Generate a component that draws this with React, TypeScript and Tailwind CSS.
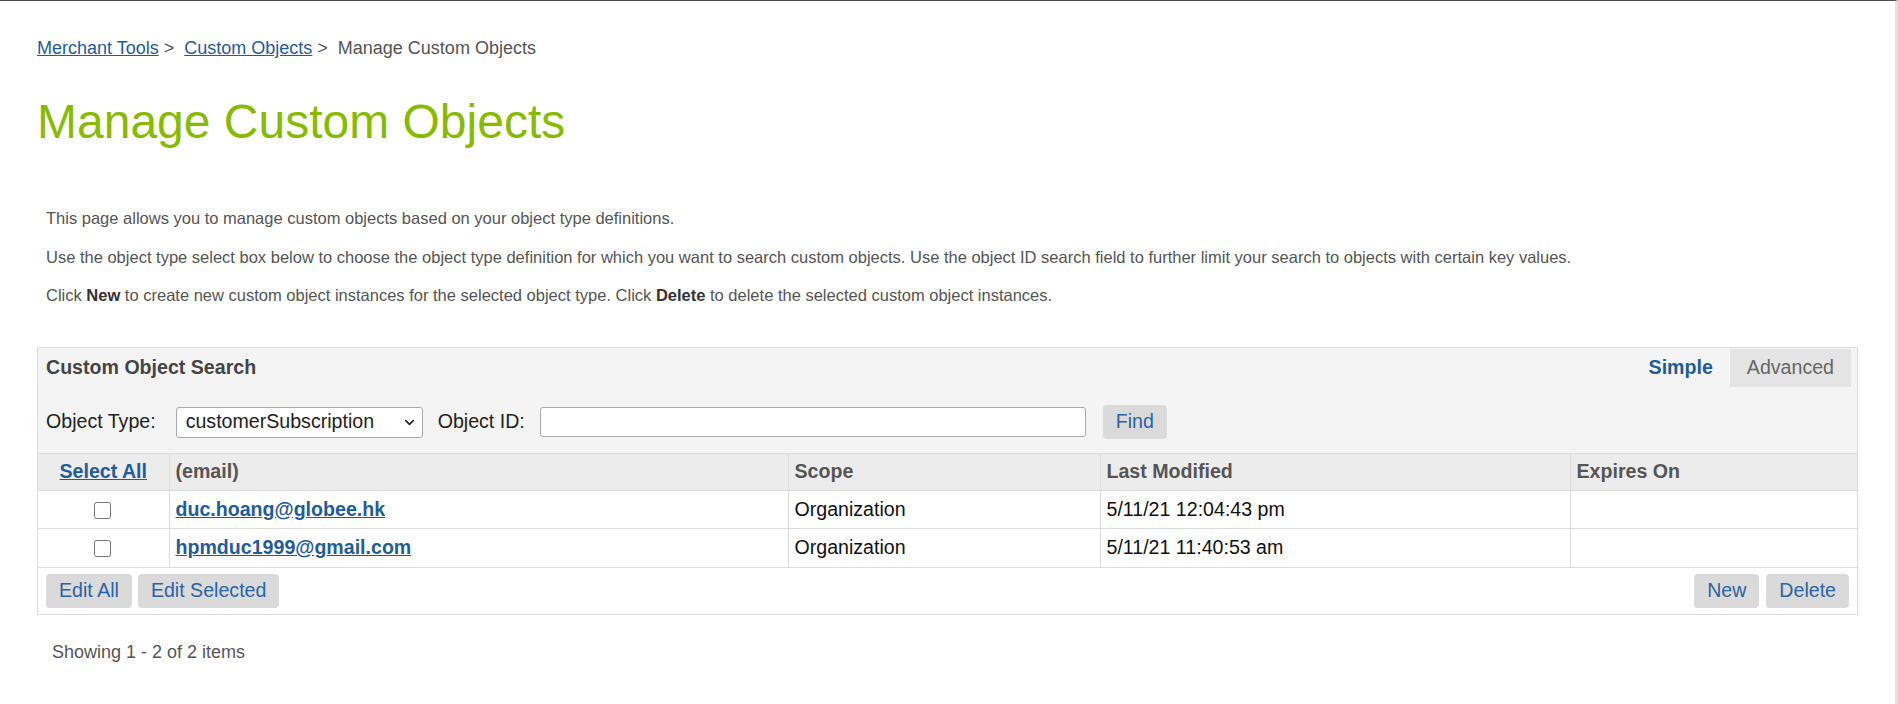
import { ChevronDown } from 'lucide-react';

const ROWS = [
  { id: 'duc.hoang@globee.hk', scope: 'Organization', modified: '5/11/21 12:04:43 pm', expires: '' },
  { id: 'hpmduc1999@gmail.com', scope: 'Organization', modified: '5/11/21 11:40:53 am', expires: '' },
];

function GrayButton({ label }: { label: string }) {
  return (
    <button className="h-[34px] px-[13px] rounded-[4px] bg-[#dadada] text-[#2a64a3] text-[19.6px] leading-none">
      {label}
    </button>
  );
}

export default function App() {
  return (
    <div className="min-h-[704px] w-full bg-white border-t border-[#4d4d4d] border-r-[3px] border-r-[#e3e3e3] font-['Liberation_Sans',Arial,sans-serif]">
      <div className="px-[37px] pt-[37px]">
        {/* breadcrumb */}
        <div className="text-[18px] leading-[21px] text-[#555]">
          <a className="text-[#1f5c99] underline">Merchant Tools</a>
          <span>&nbsp;&gt;&nbsp; </span>
          <a className="text-[#1f5c99] underline">Custom Objects</a>
          <span>&nbsp;&gt;&nbsp; </span>
          <span>Manage Custom Objects</span>
        </div>

        <h1 className="mt-[35px] text-[48px] leading-[55px] text-[#88bb00]">Manage Custom Objects</h1>

        <div className="mt-[60px] pl-[9px] text-[16.5px] leading-[18px] text-[#555] flex flex-col gap-[20.5px]">
          <p>This page allows you to manage custom objects based on your object type definitions.</p>
          <p>
            Use the object type select box below to choose the object type definition for which you want to search
            custom objects. Use the object ID search field to further limit your search to objects with certain key
            values.
          </p>
          <p>
            Click <b className="text-[#333]">New</b> to create new custom object instances for the selected object
            type. Click <b className="text-[#333]">Delete</b> to delete the selected custom object instances.
          </p>
        </div>

        {/* search panel */}
        <div className="mt-[43px] border border-[#dcdcdc] bg-[#f4f4f4]">
          <div className="flex items-center justify-between pl-[8px] pr-[6px] pt-[1px]">
            <h2 className="text-[19.6px] font-bold text-[#444]">Custom Object Search</h2>
            <div className="flex h-[38px] text-[19.6px]">
              <span className="flex items-center px-[17px] font-bold text-[#1f5c99]">Simple</span>
              <span className="flex items-center px-[17px] bg-[#e4e4e4] text-[#666]">Advanced</span>
            </div>
          </div>

          <div className="flex items-center pl-[8px] pt-[18px] pb-[14px] text-[19.6px] text-[#222]">
            <div className="h-[34px] flex items-center">Object Type:</div>
            <div className="ml-[20px] w-[247px] h-[31px] flex items-center justify-between rounded-[3px] border border-[#aaa] bg-white pl-[9px] pr-[5px]">
              <span>customerSubscription</span>
              <ChevronDown className="w-[15px] h-[15px] text-[#222]" strokeWidth={2.5} />
            </div>
            <span className="ml-[15px]">Object ID:</span>
            <input className="ml-[15px] w-[546px] h-[30px] rounded-[3px] border border-[#aaa] bg-white" />
            <div className="ml-[17px]">
              <GrayButton label="Find" />
            </div>
          </div>

          <table className="w-full table-fixed border-collapse text-[19.6px]">
            <colgroup>
              <col className="w-[131px]" />
              <col className="w-[619px]" />
              <col className="w-[312px]" />
              <col className="w-[470px]" />
              <col />
            </colgroup>
            <thead>
              <tr className="h-[37px] bg-[#ececec] border-t border-[#dcdcdc] font-bold text-[#555]">
                <th className="text-center">
                  <a className="text-[#1f5c99] underline">Select All</a>
                </th>
                <th className="text-left px-[6px] border-l border-[#dcdcdc]">(email)</th>
                <th className="text-left px-[6px] border-l border-[#dcdcdc]">Scope</th>
                <th className="text-left px-[6px] border-l border-[#dcdcdc]">Last Modified</th>
                <th className="text-left px-[6px] border-l border-[#dcdcdc]">Expires On</th>
              </tr>
            </thead>
            <tbody className="bg-white text-[#111]">
              {ROWS.map((r) => (
                <tr key={r.id} className="h-[38px] border-t border-[#dcdcdc]">
                  <td className="text-center">
                    <input type="checkbox" className="w-[17px] h-[17px] align-middle -ml-[2px]" />
                  </td>
                  <td className="px-[6px] border-l border-[#dcdcdc]">
                    <a className="font-bold text-[#1f5c99] underline">{r.id}</a>
                  </td>
                  <td className="px-[6px] border-l border-[#dcdcdc]">{r.scope}</td>
                  <td className="px-[6px] border-l border-[#dcdcdc]">{r.modified}</td>
                  <td className="px-[6px] border-l border-[#dcdcdc]">{r.expires}</td>
                </tr>
              ))}
            </tbody>
          </table>

          <div className="flex items-center justify-between bg-white border-t border-[#dcdcdc] px-[8px] pt-[6px] pb-[6px]">
            <div className="flex gap-[6px]">
              <GrayButton label="Edit All" />
              <GrayButton label="Edit Selected" />
            </div>
            <div className="flex gap-[7px]">
              <GrayButton label="New" />
              <GrayButton label="Delete" />
            </div>
          </div>
        </div>

        <div className="mt-[27px] pl-[15px] text-[18px] leading-[20px] text-[#555]">Showing 1 - 2 of 2 items</div>
      </div>
    </div>
  );
}
